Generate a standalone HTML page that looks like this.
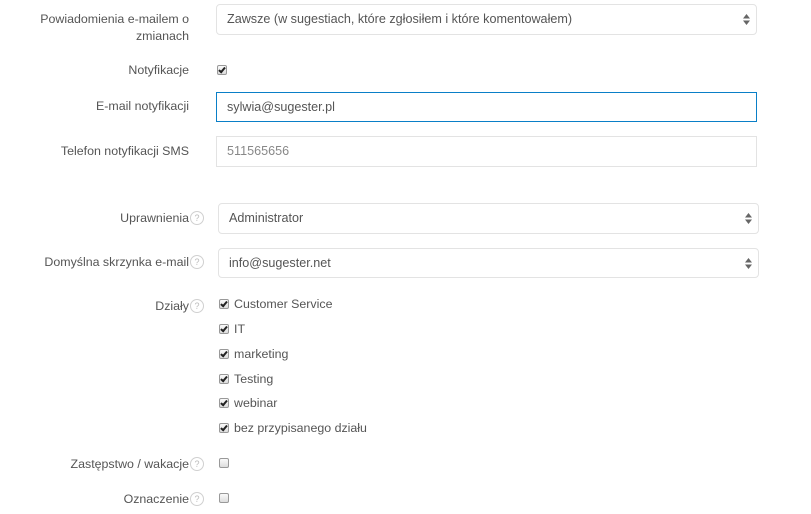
<!DOCTYPE html>
<html><head><meta charset="utf-8">
<style>
body{margin:0;width:811px;height:514px;background:#fff;font-family:"Liberation Sans",sans-serif;font-size:12.4px;color:#555;position:relative;overflow:hidden}
.l{position:absolute;text-align:right;line-height:17px}
.box{position:absolute;box-sizing:border-box;border:1px solid #e3e3e3;border-radius:4px;background:#fff;padding-left:10px;line-height:28px;font-size:12.6px;color:#555}
.arr{position:absolute;right:6px;top:9px;width:7px;height:11px}
.q{display:inline-block;width:12px;height:12px;border:1px solid #d0d0d0;border-radius:50%;font-size:9px;line-height:12px;text-align:center;color:#bbb;vertical-align:1px;margin-left:1px}
.cb{position:absolute;width:8px;height:8px;border:1px solid #999;border-radius:2px;background:linear-gradient(#fafafa,#ddd)}
.cb.c::after{content:"";position:absolute;left:2px;top:0px;width:2px;height:5px;border:solid #222;border-width:0 2px 2px 0;transform:rotate(40deg)}
.ct{position:absolute;left:234px;line-height:17px}
</style></head><body>
<div class="l" style="right:622px;top:11px;width:200px">Powiadomienia e-mailem o<br>zmianach</div>
<div class="box" style="left:216px;top:4px;width:541px;height:31px">Zawsze (w sugestiach, które zgłosiłem i które komentowałem)<svg class="arr" viewBox="0 0 7 11"><path d="M3.5 0L7 4.5H0Z M0 6.5H7L3.5 11Z" fill="#666"/></svg></div>

<div class="l" style="right:622px;top:62px">Notyfikacje</div>
<div class="cb c" style="left:217px;top:65px"></div>

<div class="l" style="right:622px;top:98px">E-mail notyfikacji</div>
<div class="box" style="left:216px;top:92px;width:541px;height:30px;border:1px solid #0a7fc7;border-radius:0">sylwia@sugester.pl</div>

<div class="l" style="right:622px;top:143px">Telefon notyfikacji SMS</div>
<div class="box" style="left:216px;top:136px;width:541px;height:31px;border-radius:0;color:#888">511565656</div>

<div class="l" style="right:607px;top:210px">Uprawnienia<span class="q">?</span></div>
<div class="box" style="left:218px;top:203px;width:541px;height:31px">Administrator<svg class="arr" viewBox="0 0 7 11"><path d="M3.5 0L7 4.5H0Z M0 6.5H7L3.5 11Z" fill="#666"/></svg></div>

<div class="l" style="right:607px;top:254px">Domyślna skrzynka e-mail<span class="q">?</span></div>
<div class="box" style="left:218px;top:248px;width:541px;height:30px">info@sugester.net<svg class="arr" viewBox="0 0 7 11"><path d="M3.5 0L7 4.5H0Z M0 6.5H7L3.5 11Z" fill="#666"/></svg></div>

<div class="l" style="right:607px;top:298px">Działy<span class="q">?</span></div>
<div class="cb c" style="left:219px;top:299px"></div><div class="ct" style="top:296px">Customer Service</div>
<div class="cb c" style="left:219px;top:324px"></div><div class="ct" style="top:321px">IT</div>
<div class="cb c" style="left:219px;top:349px"></div><div class="ct" style="top:346px">marketing</div>
<div class="cb c" style="left:219px;top:374px"></div><div class="ct" style="top:371px">Testing</div>
<div class="cb c" style="left:219px;top:398px"></div><div class="ct" style="top:395px">webinar</div>
<div class="cb c" style="left:219px;top:423px"></div><div class="ct" style="top:420px">bez przypisanego działu</div>

<div class="l" style="right:607px;top:456px">Zastępstwo / wakacje<span class="q">?</span></div>
<div class="cb" style="left:219px;top:458px"></div>

<div class="l" style="right:607px;top:491px">Oznaczenie<span class="q">?</span></div>
<div class="cb" style="left:219px;top:493px"></div>
</body></html>
